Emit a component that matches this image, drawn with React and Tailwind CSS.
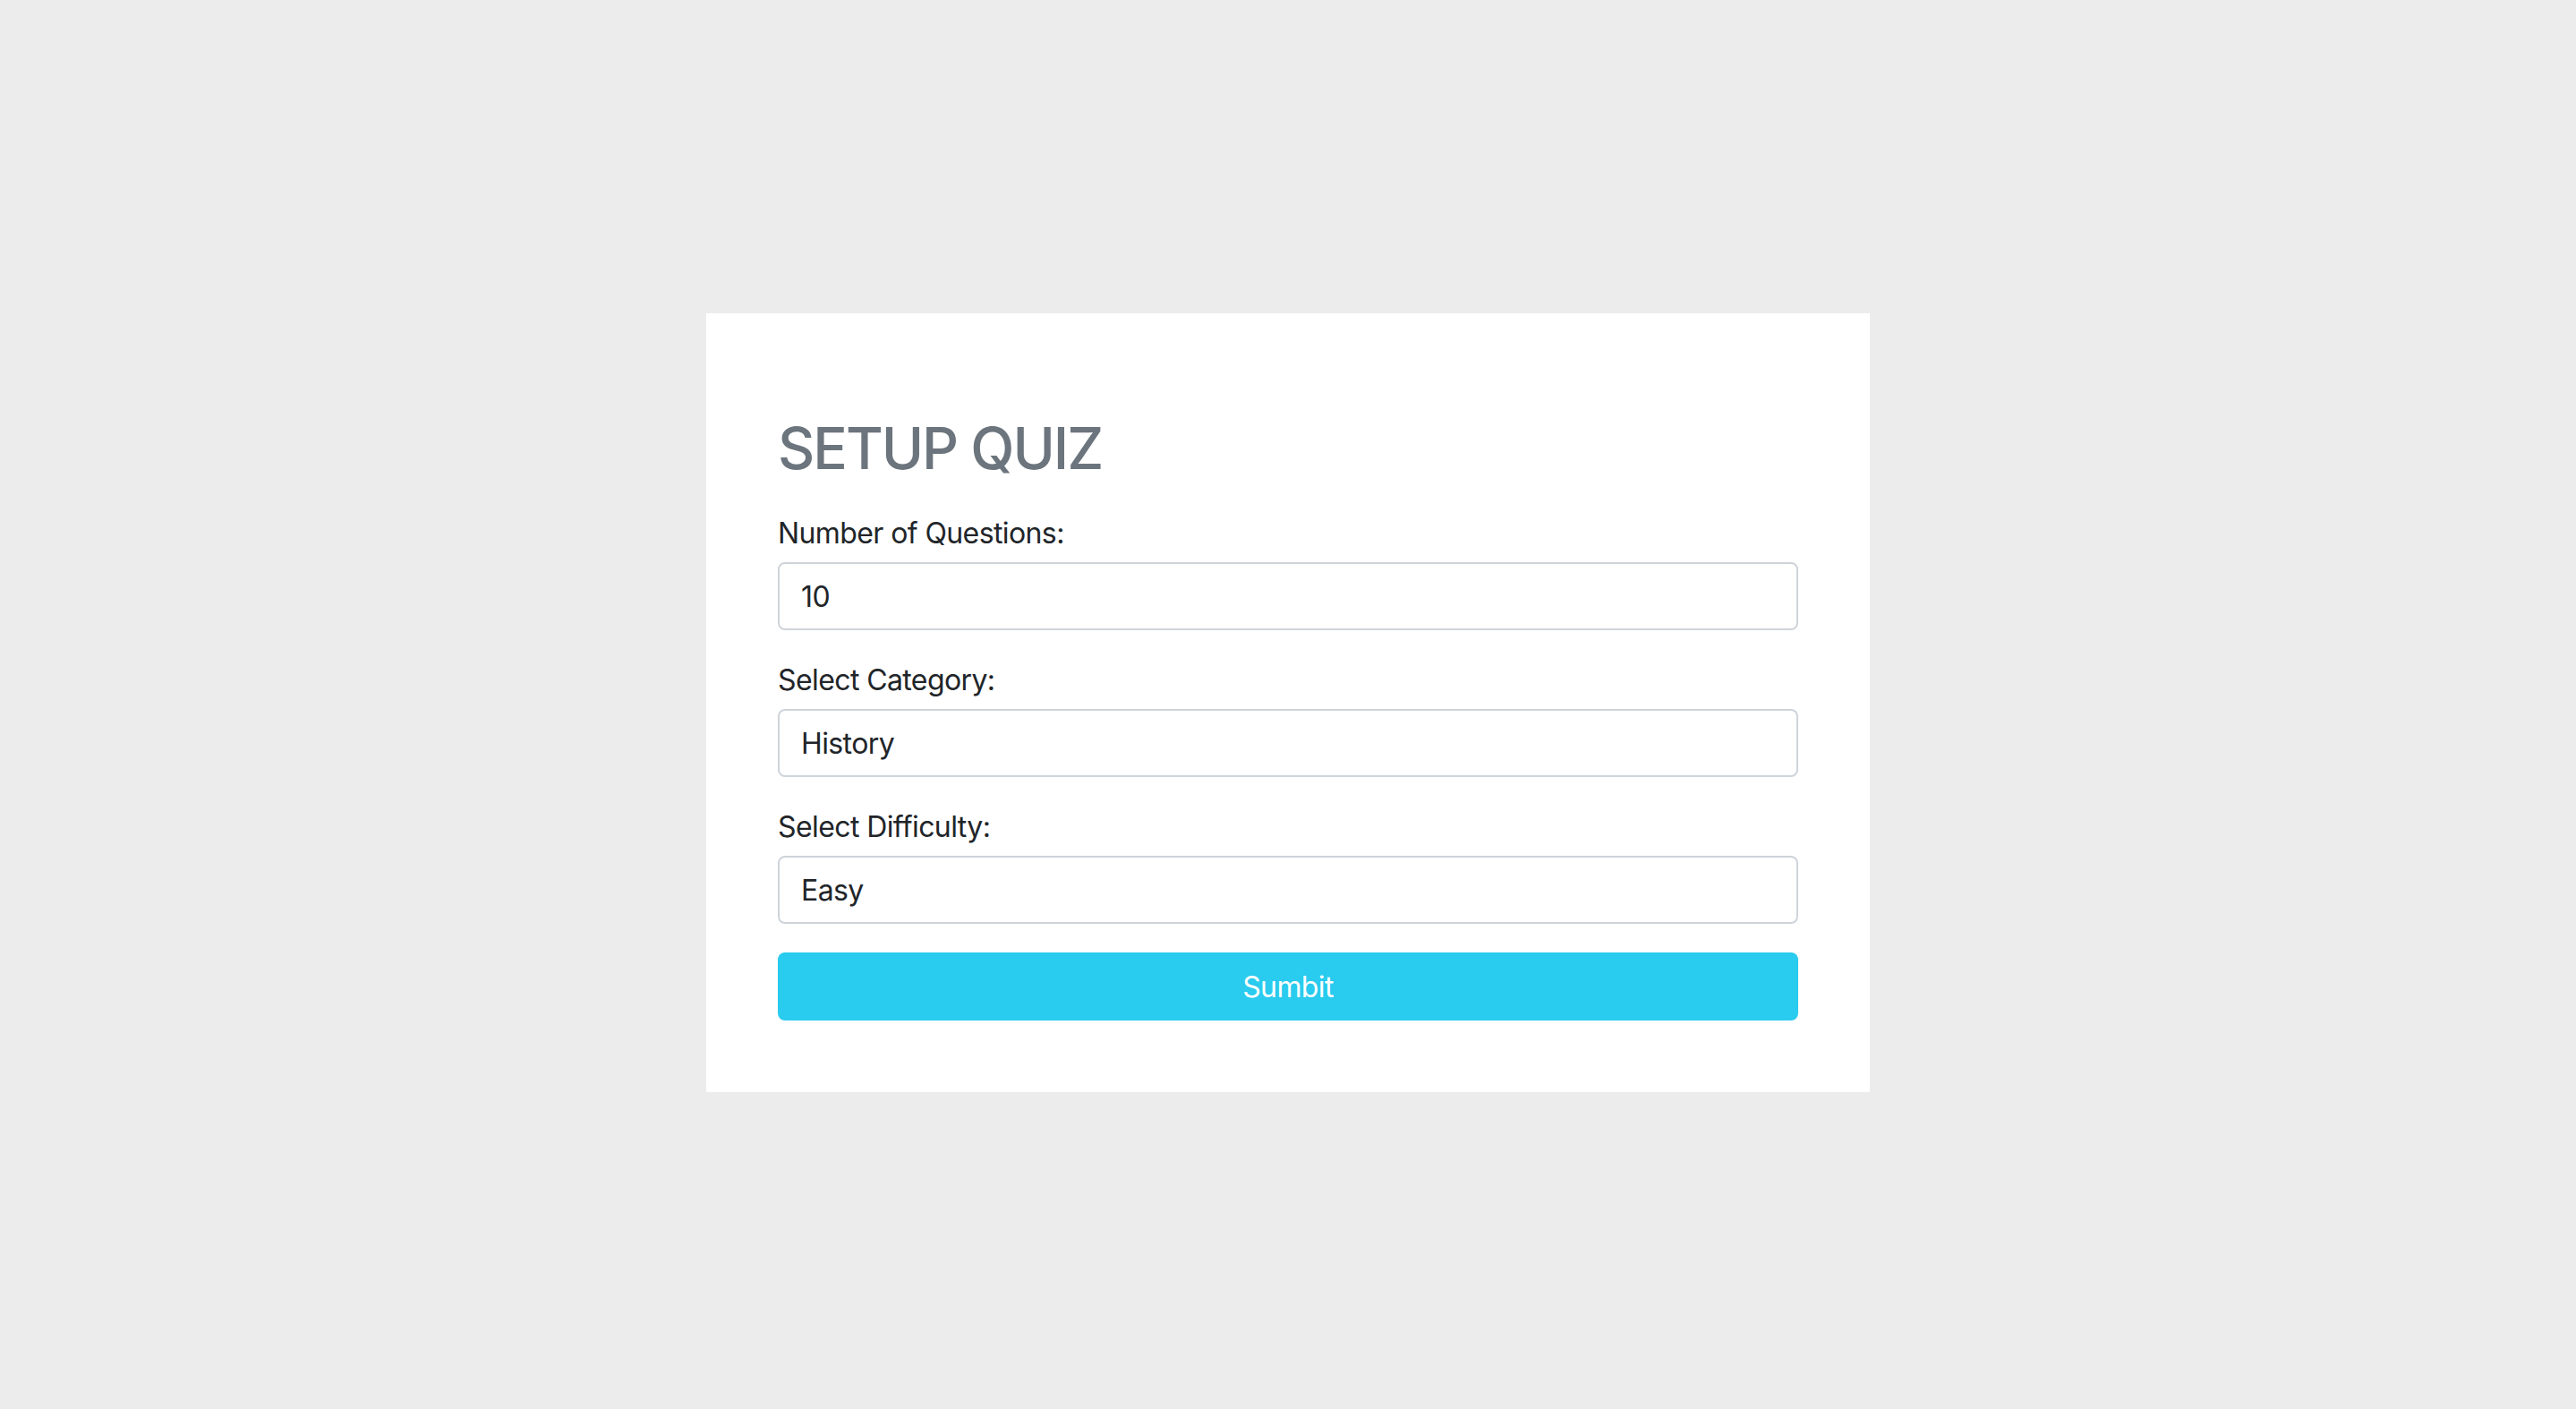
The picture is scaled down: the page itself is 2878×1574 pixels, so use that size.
export default function App() {
  const fields = [
    { label: "Number of Questions:", value: "10" },
    { label: "Select Category:", value: "History" },
    { label: "Select Difficulty:", value: "Easy" },
  ];
  return (
    <div className="min-h-screen w-full bg-[#ececec] flex justify-center items-start pt-[350px] font-['Inter',sans-serif]">
      <div className="w-[1300px] bg-white px-[80px] pt-[113px] pb-[80px] flex flex-col">
        <h2 className="text-[64px] leading-[76.8px] font-medium tracking-[-2px] text-[#6c757d] mb-[32px]">SETUP QUIZ</h2>
        {fields.map((f, i) => (
          <div key={i} className="flex flex-col mb-[32px]">
            <label className="text-[32px] leading-[48px] tracking-[-0.6px] text-[#212529] mb-[8px]">{f.label}</label>
            <div className="h-[76px] border-2 border-[#ced4da] rounded-[8px] px-[24px] pt-[2px] flex items-center text-[32px] tracking-[-0.6px] text-[#212529] bg-white">
              {f.value}
            </div>
          </div>
        ))}
        <button className="h-[76px] w-full rounded-[8px] bg-[#29cbee] text-white text-[32px] tracking-[-0.6px] pt-[2px] flex items-center justify-center">
          Sumbit
        </button>
      </div>
    </div>
  );
}
